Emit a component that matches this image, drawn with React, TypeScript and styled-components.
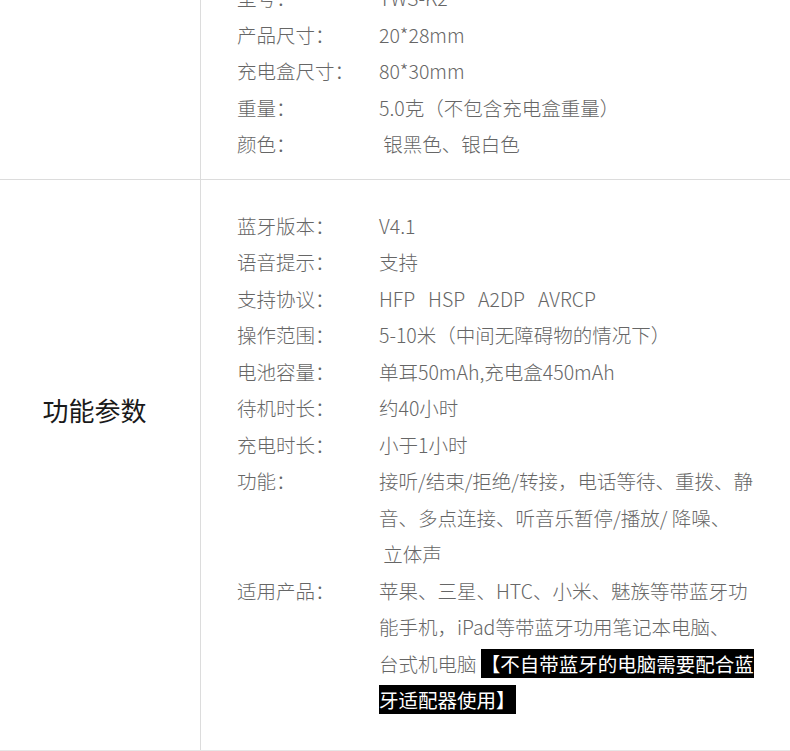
import React from "react";
import styled, { createGlobalStyle } from "styled-components";

interface spec {
  label: string;
  value: React.ReactNode;
}

const GlobalStyle = createGlobalStyle`
  body {
    margin: 0;
    background: #fff;
    overflow: hidden;
  }
`;

const Table = styled.div`
  margin-top: -48px;
  width: 790px;
  border-bottom: 1px solid #e6e6e6;
  font-family: "Noto Sans CJK SC", "Noto Sans", sans-serif;
`;

const Section = styled.div<{ $first?: boolean }>`
  display: grid;
  grid-template-columns: 201px 1fr;
  border-top: ${(p) => (p.$first ? "none" : "1px solid #dcdcdc")};
`;

const TitleCell = styled.div<{ $top: number }>`
  border-right: 1px solid #dcdcdc;
  padding-top: ${(p) => p.$top}px;
  padding-right: 11px;
  text-align: center;
  font-size: 26px;
  line-height: 36px;
  color: #1a1a1a;
`;

const Body = styled.div<{ $top: number; $bottom: number }>`
  padding: ${(p) => p.$top}px 0 ${(p) => p.$bottom}px 36px;
`;

const Row = styled.div`
  display: grid;
  grid-template-columns: 142px 1fr;
  font-family: "Noto Sans CJK SC Light", "Noto Sans CJK SC", sans-serif;
  font-size: 19.5px;
  line-height: 36.5px;
  font-weight: 300;
  color: #666;
  white-space: nowrap;
`;

const Label = styled.div``;

const Value = styled.div``;

const Highlight = styled.span`
  background: #000;
  color: #fff;
  font-family: "Noto Sans CJK SC", sans-serif;
  font-weight: 400;
`;

const basics: spec[] = [
  { label: "型号：", value: "TWS-K2" },
  { label: "产品尺寸：", value: "20*28mm" },
  { label: "充电盒尺寸：", value: "80*30mm" },
  { label: "重量：", value: "5.0克（不包含充电盒重量）" },
  { label: "颜色：", value: "\u00a0银黑色、银白色" },
];

const features: spec[] = [
  { label: "蓝牙版本：", value: "V4.1" },
  { label: "语音提示：", value: "支持" },
  { label: "支持协议：", value: "HFP\u00a0\u00a0\u00a0HSP\u00a0\u00a0\u00a0A2DP\u00a0\u00a0\u00a0AVRCP" },
  { label: "操作范围：", value: "5-10米（中间无障碍物的情况下）" },
  { label: "电池容量：", value: "单耳50mAh,充电盒450mAh" },
  { label: "待机时长：", value: "约40小时" },
  { label: "充电时长：", value: "小于1小时" },
  {
    label: "功能：",
    value: (
      <>
        接听/结束/拒绝/转接，电话等待、重拨、静
        <br />
        音、多点连接、听音乐暂停/播放/ 降噪、
        <br />
        {"\u00a0"}立体声
      </>
    ),
  },
  {
    label: "适用产品：",
    value: (
      <>
        苹果、三星、HTC、小米、魅族等带蓝牙功
        <br />
        能手机，iPad等带蓝牙功用笔记本电脑、
        <br />
        台式机电脑{" "}
        <Highlight>
          【不自带蓝牙的电脑需要配合蓝
          <br />
          牙适配器使用】
        </Highlight>
      </>
    ),
  },
];

function SpecRows({ items }: { items: spec[] }) {
  return (
    <>
      {items.map((item) => (
        <Row key={item.label}>
          <Label>{item.label}</Label>
          <Value>{item.value}</Value>
        </Row>
      ))}
    </>
  );
}

export default function App() {
  return (
    <>
      <GlobalStyle />
      <Table>
        <Section $first>
          <TitleCell $top={0} />
          <Body $top={28} $bottom={16}>
            <SpecRows items={basics} />
          </Body>
        </Section>
        <Section>
          <TitleCell $top={212}>功能参数</TitleCell>
          <Body $top={28} $bottom={31}>
            <SpecRows items={features} />
          </Body>
        </Section>
      </Table>
    </>
  );
}
